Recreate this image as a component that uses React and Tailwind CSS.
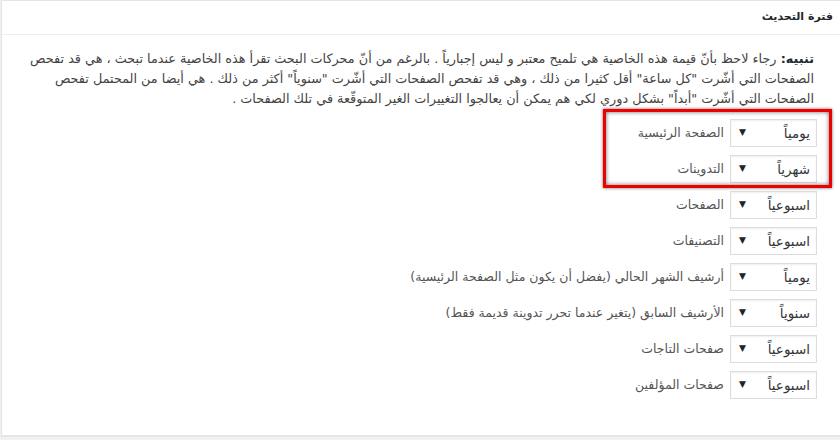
import React from "react";

const rows = [
  { v: "يومياً", l: "الصفحة الرئيسية" },
  { v: "شهرياً", l: "التدوينات" },
  { v: "اسبوعياً", l: "الصفحات" },
  { v: "اسبوعياً", l: "التصنيفات" },
  { v: "يومياً", l: "أرشيف الشهر الحالي (يفضل أن يكون مثل الصفحة الرئيسية)" },
  { v: "سنوياً", l: "الأرشيف السابق (يتغير عندما تحرر تدوينة قديمة فقط)" },
  { v: "اسبوعياً", l: "صفحات التاجات" },
  { v: "اسبوعياً", l: "صفحات المؤلفين" },
];

export default function App() {
  return (
    <div
      className="relative w-[840px] h-[440px] overflow-hidden bg-[#f1f1f1]"
      style={{ fontFamily: '"DejaVu Sans", Tahoma, sans-serif' }}
    >
      <div
        dir="rtl"
        className="ml-[1px] w-[850px] h-[436px] bg-white border border-[#e5e5e5] shadow-[0_1px_1px_rgba(0,0,0,0.04)] flex flex-col"
      >
        <div className="h-[34px] border-b border-[#eeeeee] flex items-center pr-[17px] text-[11px] font-bold text-[#23282d] shrink-0">
          فترة التحديث
        </div>
        <div className="pr-[36px] pl-[20px] pt-[14px]">
          <p className="text-[12.8px] leading-[20px] text-[#444]">
            <b className="font-bold text-[#23282d]">تنبيه:</b>{" "}
            رجاء لاحظ بأنّ قيمة هذه الخاصية هي تلميح معتبر و ليس إجبارياً . بالرغم من أنّ محركات البحث تقرأ هذه الخاصية عندما تبحث ، هي قد تفحص الصفحات التي أشّرت "كل ساعة" أقل كثيرا من ذلك ، وهي قد تفحص الصفحات التي أشّرت "سنوياً" أكثر من ذلك . هي أيضا من المحتمل تفحص الصفحات التي أشّرت "أبداً" بشكل دوري لكي هم يمكن أن يعالجوا التغييرات الغير المتوقّعة في تلك الصفحات .
          </p>
          <div className="mt-[10px] flex flex-col gap-[8px] mr-[-3px]">
            {rows.map((r, i) => (
              <div key={i} className="flex items-center gap-[6px]">
                <div className="w-[87px] h-[28px] border border-[#dddddd] bg-white shadow-[inset_0_1px_2px_rgba(0,0,0,0.07)] flex items-center justify-between pr-[6px] pl-[8px] text-[13.5px] text-[#32373c]">
                  <span>{r.v}</span>
                  <span className="text-[9px] text-[#222]">▼</span>
                </div>
                <span className="text-[12.5px] text-[#555]">{r.l}</span>
              </div>
            ))}
          </div>
        </div>
      </div>
      <div className="absolute left-[603px] top-[109px] w-[229px] h-[79px] border-[3px] border-[#ee0000] shadow-[0_0_3px_rgba(0,0,0,0.6),inset_0_0_4px_rgba(0,0,0,0.6)]" />
    </div>
  );
}
